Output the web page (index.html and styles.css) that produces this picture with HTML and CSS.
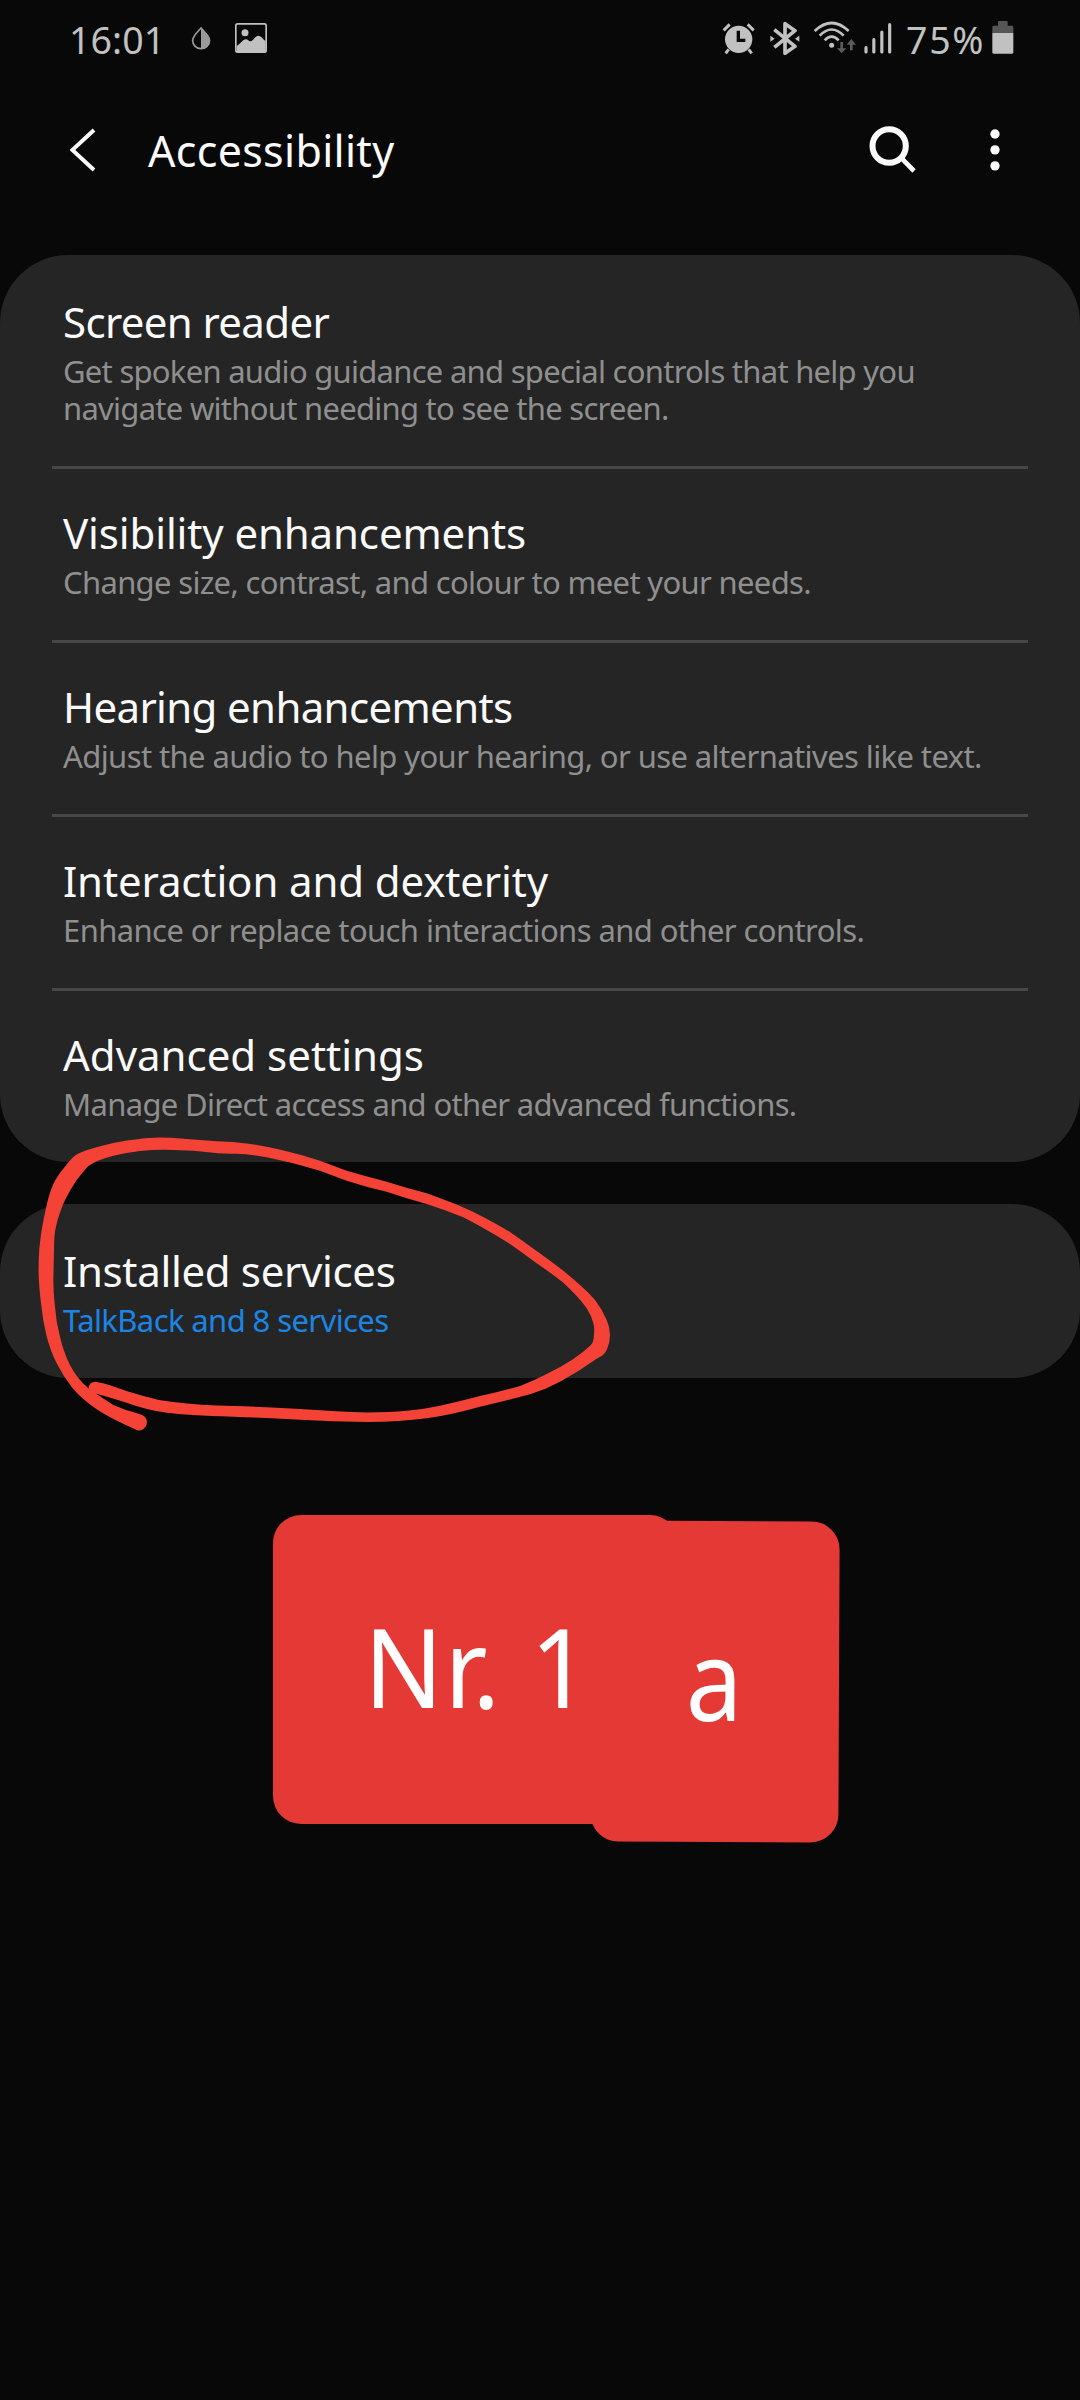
FILE: index.html
```
<!DOCTYPE html>
<html lang="en">
<head>
<meta charset="utf-8">
<title>Accessibility</title>
<link rel="stylesheet" href="styles.css">
</head>
<body>
<div class="screen">
  <header class="status">
    <span class="clock">16:01</span>
    <svg class="drop" width="20" height="34" viewBox="453 63 60 102"><path d="M483 84C476 93 458 107 458 122a25 24 0 0 0 50 0C508 107 490 93 483 84z" fill="none" stroke="#9a9a9a" stroke-width="5"/><path d="M483 82C490 92 511 106 511 122A28 26 0 0 1 483 148z" fill="#9a9a9a"/></svg>
    <svg class="picture" width="32" height="34" viewBox="585 63 96 102"><rect x="587.500" y="71.500" width="91" height="85" rx="5" fill="none" stroke="#c1c1c1" stroke-width="5"/><circle cx="615" cy="98" r="10.500" fill="#c1c1c1"/><path d="M590 138c10-4 18-20 28-20 6 0 8 6 13 6 7 0 15-17 24-17 8 0 15 12 22 16v34h-87z" fill="#c1c1c1"/></svg>
    <span class="spacer"></span>
    <svg class="alarm" width="33" height="34" viewBox="64 63 99 102"><g stroke="#c1c1c1" fill="none"><path d="M69 91L87 73M159 91L141 73" stroke-width="9"/><path d="M84 148L75 160M144 148L153 160" stroke-width="9"/></g><circle cx="114" cy="118" r="41" fill="#c1c1c1"/><path d="M113 92V121H134" fill="none" stroke="#080808" stroke-width="10"/></svg>
    <svg class="bt" width="30" height="34" viewBox="209 63 90 102"><path d="M222 89L284 139L254 160V71L284 92L222 142" fill="none" stroke="#c1c1c1" stroke-width="11" stroke-linejoin="round"/><path d="M210 107L223 116L210 125zM297 107L284 116L297 125z" fill="#c1c1c1"/></svg>
    <svg class="wifi" width="42" height="34" viewBox="341 63 126 102"><g fill="none" stroke="#c1c1c1" stroke-width="8"><path d="M343 93Q394 45 445 93"/><path d="M358 107Q394 70 430 107"/><path d="M373 121Q394 99 415 121"/></g><circle cx="394" cy="136" r="7.500" fill="#c1c1c1"/><path d="M420 126h8v19h10L424 160 410 145h10zM449 151h8v-17h10L453 117 439 134h10z" fill="#5c5c5c"/></svg>
    <svg class="signal" width="28" height="34" viewBox="491 63 84 102"><path d="M497 143V156M520.500 119V156M544.500 96V156M568 74V156" stroke="#c1c1c1" stroke-width="9.500" stroke-linecap="round"/></svg>
    <span class="percent">75%</span>
    <svg class="battery" width="22" height="34" viewBox="875 63 66 102"><path d="M876 99V81q0-4 4-4h13V66q0-3 3-3h23q3 0 3 3v11h13q4 0 4 4v18z" fill="#555"/><path d="M876 99h63v58q0 4-4 4h-55q-4 0-4-4z" fill="#c1c1c1"/></svg>
  </header>
  <nav class="appbar">
    <svg class="back" width="26" height="44" viewBox="91 383 78 132"><path d="M163 389L98 449L163 509" fill="none" stroke="#fafafa" stroke-width="12"/></svg>
    <h1 class="heading">Accessibility</h1>
    <span class="spacer"></span>
    <svg class="search" width="48" height="48" viewBox="506 377 144 144"><circle cx="566.500" cy="437" r="50" fill="none" stroke="#fafafa" stroke-width="18"/><path d="M602 472L641 512" stroke="#fafafa" stroke-width="14"/></svg>
    <svg class="more" width="10" height="44" viewBox="871 383 30 132"><g fill="#fafafa"><circle cx="886" cy="401" r="14"/><circle cx="886" cy="448.500" r="14"/><circle cx="886" cy="496.500" r="14"/></g></svg>
  </nav>
  <main>
    <section class="card">
      <div class="row">
        <h2 class="title narrow">Screen reader</h2>
        <p class="sub tight">Get spoken audio guidance and special controls that help you<br>navigate without needing to see the screen.</p>
      </div>
      <div class="row">
        <h2 class="title">Visibility enhancements</h2>
        <p class="sub">Change size, contrast, and colour to meet your needs.</p>
      </div>
      <div class="row">
        <h2 class="title narrow">Hearing enhancements</h2>
        <p class="sub loose">Adjust the audio to help your hearing, or use alternatives like text.</p>
      </div>
      <div class="row">
        <h2 class="title">Interaction and dexterity</h2>
        <p class="sub loose">Enhance or replace touch interactions and other controls.</p>
      </div>
      <div class="row">
        <h2 class="title wide">Advanced settings</h2>
        <p class="sub">Manage Direct access and other advanced functions.</p>
      </div>
    </section>
    <section class="card">
      <div class="row">
        <h2 class="title compact">Installed services</h2>
        <p class="sub loose link">TalkBack and 8 services</p>
      </div>
    </section>
  </main>
  <svg class="scribble" width="700" height="320" viewBox="0 0 2100 960"><path fill="#f44336" d="M412 931Q330 895 290 868Q245 837 218 805Q190 770 170 730Q150 690 139 645Q128 600 123 550Q117 500 116 465Q115 430 118 385Q122 340 131 297Q140 255 145 235Q150 215 160 192Q170 170 194 141Q218 108 234 101Q250 92 295 80Q340 68 385 61Q430 54 465 53Q500 52 550 56Q600 60 650 64Q700 65 745 71Q790 77 845 90Q900 103 960 122Q1000 137 1040 152Q1095 168 1160 185Q1220 204 1280 220Q1335 240 1375 256Q1415 273 1450 291Q1493 314 1530 336Q1570 364 1610 393Q1652 423 1690 452Q1717 474 1740 495Q1766 518 1785 540Q1808 570 1820 600Q1830 622 1830 645Q1830 668 1822 685Q1816 701 1805 708Q1798 711 1790 716Q1735 755 1680 785Q1635 809 1590 823Q1515 843 1440 860Q1350 885 1280 895Q1200 906 1100 906Q1000 905 900 899Q800 894 700 890Q560 885 500 878Q440 870 380 848Q330 833 285 820Q268 816 266 802Q268 786 286 785Q310 788 330 796Q380 815 430 828Q475 842 520 846Q600 856 700 858Q800 861 900 867Q1000 874 1080 877Q1160 878 1220 872Q1270 868 1320 857Q1380 844 1440 828Q1502 815 1560 798Q1602 782 1640 762Q1682 742 1720 717Q1750 697 1772 676Q1782 668 1782 640Q1784 622 1780 610Q1774 586 1760 565Q1748 547 1730 528Q1712 508 1690 488Q1653 459 1610 430Q1570 400 1530 372Q1510 359 1490 347Q1440 318 1390 292Q1340 271 1280 252Q1222 236 1160 215Q1098 201 1040 182Q1000 167 960 152Q880 128 800 112Q750 102 710 101Q670 101 640 98Q580 90 520 90Q470 88 420 93Q380 98 340 107Q290 120 265 138Q245 160 230 180Q210 210 195 240Q175 285 168 320Q162 340 162 390L160 480Q160 520 165 560Q168 605 180 650Q190 695 210 735Q230 775 265 805Q300 830 340 855Q380 873 425 884A24.500 24.500 0 0 1 412 931z"/></svg>
  <div class="tag tag-number"><span>Nr. 1</span></div>
  <div class="tag tag-letter"><span>a</span></div>
</div>
</body>
</html>
```
FILE: styles.css
```
* { box-sizing: border-box; }
body { margin: 0; background: #080808; font-family: "Noto Sans", sans-serif; }
h1, h2, p { margin: 0; font-weight: 400; }
svg { display: block; flex: none; }
.screen { position: relative; width: 1080px; height: 2400px; overflow: hidden; color: #fafafa; }
.spacer { flex: 1; }

.status { display: flex; height: 78px; padding: 21px 66px 0 69px; color: #c1c1c1; font-size: 37.5px; line-height: 37px; white-space: nowrap; }
.clock { width: 122px; letter-spacing: 0.1px; }
.picture { margin-left: 24px; }
.bt { margin-left: 15px; }
.wifi { margin-left: 14px; }
.signal { margin-left: 8px; }
.percent { width: 86px; margin-left: 14px; letter-spacing: 1.7px; }

.appbar { display: flex; align-items: center; height: 144px; padding: 0 80px 0 70px; margin-bottom: 33px; }
.heading { padding-top: 2px; margin-left: 52px; font-size: 43px; line-height: 60px; letter-spacing: 0.3px; white-space: nowrap; }
.more { margin-left: 73px; }

.card { padding: 0 52px; border-radius: 68px; background: #252525; }
.card + .card { margin-top: 42px; }
.row { padding: 35px 0 0 11px; height: 174px; border-top: 3px solid #474747; white-space: nowrap; }
.row:first-child { border-top-color: transparent; }
.row:first-child:not(:last-child) { height: 211px; }
.title { font-size: 42px; line-height: 58px; letter-spacing: -0.13px; }
.title.narrow { letter-spacing: -0.65px; }
.title.compact { letter-spacing: -0.33px; }
.title.wide { letter-spacing: 0; }
.sub { margin-top: 2px; font-size: 31px; line-height: 37px; letter-spacing: -0.67px; color: #8f8f8f; }
.sub.tight { letter-spacing: -0.73px; }
.sub.loose { letter-spacing: -0.6px; }
.sub.link { color: #1a85e5; }

.scribble { position: absolute; left: 0; top: 1120px; }
.tag { position: absolute; background: #e53935; color: #fff; font-size: 109px; line-height: 1; white-space: nowrap; border-radius: 28px; }
.tag span { position: absolute; transform-origin: 0 0; }
.tag-number { left: 272.500px; top: 1514.700px; width: 405px; height: 309.600px; }
.tag-number span { left: 91.500px; top: 96px; letter-spacing: 1.5px; transform: scaleX(0.955); }
.tag-letter { left: 591px; top: 1521px; width: 248px; height: 321px; font-size: 112px; transform: rotate(0.250deg); }
.tag-letter span { left: 94.500px; top: 101px; transform: scaleX(0.9); }
```
